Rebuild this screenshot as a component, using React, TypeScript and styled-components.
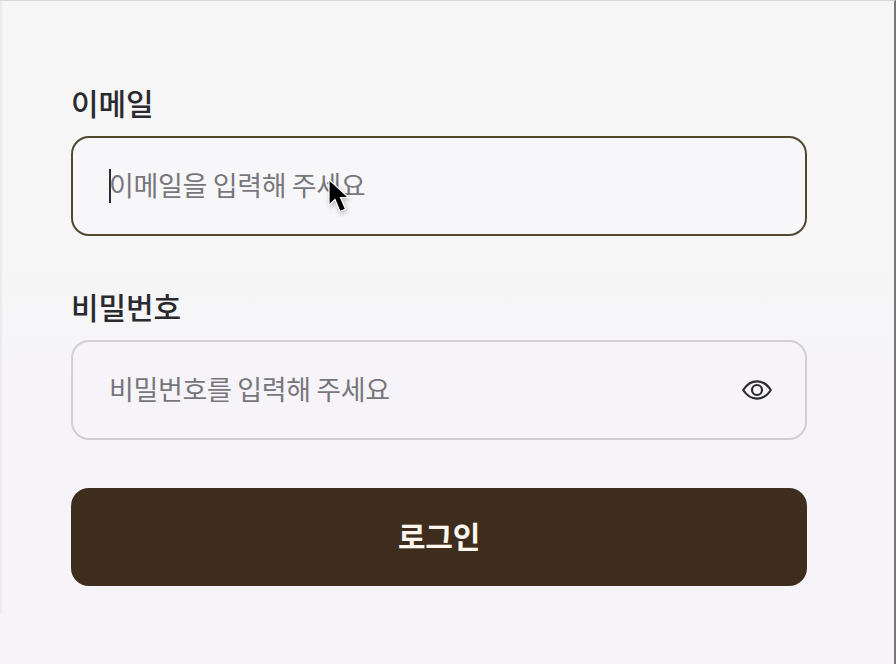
import React from "react";
import styled, { createGlobalStyle } from "styled-components";

const GlobalStyle = createGlobalStyle`
  html, body {
    margin: 0;
    padding: 0;
    background: #f6f5f7;
  }
  * {
    box-sizing: border-box;
  }
`;

function EyeIcon() {
  return (
    <svg width="30" height="20" viewBox="0 0 30 20" fill="none">
      <path
        d="M1.2 10C4.6 4.6 9.4 1.4 15 1.4S25.400 4.600 28.800 10C25.400 15.400 20.600 18.600 15 18.600S4.600 15.400 1.200 10Z"
        stroke="#2b2b2e"
        strokeWidth="2.200"
        strokeLinejoin="round"
      />
      <circle cx="15" cy="10" r="5" stroke="#2b2b2e" strokeWidth="2.200" />
    </svg>
  );
}

function CursorIcon() {
  return (
    <svg width="24" height="38" viewBox="0 0 24 38">
      <path
        d="M2 1.500V27L8 21.500L13 33.500L18.500 31L13.500 19.500L21.500 19.500Z"
        fill="#000"
        stroke="#fff"
        strokeWidth="1.200"
      />
    </svg>
  );
}

function App() {
  return (
    <Page>
      <GlobalStyle />
      <Form>
        <Field>
          <Label>이메일</Label>
          <InputBox $focused>
            <Caret />
            <Input type="email" placeholder="이메일을 입력해 주세요" />
            <Pointer>
              <CursorIcon />
            </Pointer>
          </InputBox>
        </Field>
        <Field>
          <Label>비밀번호</Label>
          <InputBox>
            <Input type="password" placeholder="비밀번호를 입력해 주세요" />
            <EyeButton type="button">
              <EyeIcon />
            </EyeButton>
          </InputBox>
        </Field>
        <Submit type="button">로그인</Submit>
      </Form>
    </Page>
  );
}

export default App;

const Page = styled.div`
  position: relative;
  width: 896px;
  height: 664px;
  overflow: hidden;
  padding: 81px 89px 0 71px;
  background: linear-gradient(180deg, #f6f6f6 0%, #f6f6f6 38%, #f6f4f8 58%, #f6f4f8 100%);
  font-family: "Noto Sans CJK KR", "Noto Sans", sans-serif;
  border-top: 1px solid #d6d6d6;
  border-right: 2px solid #77767a;

  &::before {
    content: "";
    position: absolute;
    left: 0;
    top: 0;
    width: 2px;
    height: 612px;
    background: #ebebeb;
  }
`;

const Form = styled.form`
  display: flex;
  flex-direction: column;
  row-gap: 32px;
`;

const Field = styled.div`
  display: flex;
  flex-direction: column;
  row-gap: 14px;

  & + & {
    margin-top: 18px;
  }
`;

const Label = styled.label`
  font-size: 30px;
  font-weight: 500;
  line-height: 40px;
  letter-spacing: -0.1px;
  color: #2a2a2e;
`;

const InputBox = styled.div<{ $focused?: boolean }>`
  position: relative;
  display: flex;
  align-items: center;
  width: 736px;
  height: 100px;
  padding: 0 33px 3px 36px;
  border-radius: 18px;
  border: 2px solid ${(props) => (props.$focused ? "#51492f" : "#d2ced3")};
  background: ${(props) => (props.$focused ? "#f7f7fa" : "#f6f4f8")};
`;

const Input = styled.input`
  flex: 1;
  min-width: 0;
  border: none;
  outline: none;
  background: transparent;
  padding: 0;
  font-family: inherit;
  font-size: 27px;
  font-weight: 400;
  letter-spacing: -0.35px;
  color: #26262a;

  &::placeholder {
    color: #77767b;
    opacity: 1;
  }
`;

const Caret = styled.span`
  position: absolute;
  left: 36px;
  top: 31px;
  width: 2px;
  height: 34px;
  background: #2b2b3a;
`;

const Pointer = styled.span`
  position: absolute;
  left: 254px;
  top: 40px;
  display: flex;
  filter: drop-shadow(1px 2px 2px rgba(0, 0, 0, 0.25));
`;

const EyeButton = styled.button`
  display: flex;
  align-items: center;
  justify-content: center;
  border: none;
  background: none;
  padding: 0;
  margin-top: 3px;
`;

const Submit = styled.button`
  width: 736px;
  height: 98px;
  margin-top: 16px;
  padding: 0 0 4px;
  border: none;
  border-radius: 18px;
  background: #3e2d1c;
  color: #fdf6ee;
  font-family: inherit;
  font-size: 30px;
  font-weight: 700;
  letter-spacing: -0.2px;
`;
